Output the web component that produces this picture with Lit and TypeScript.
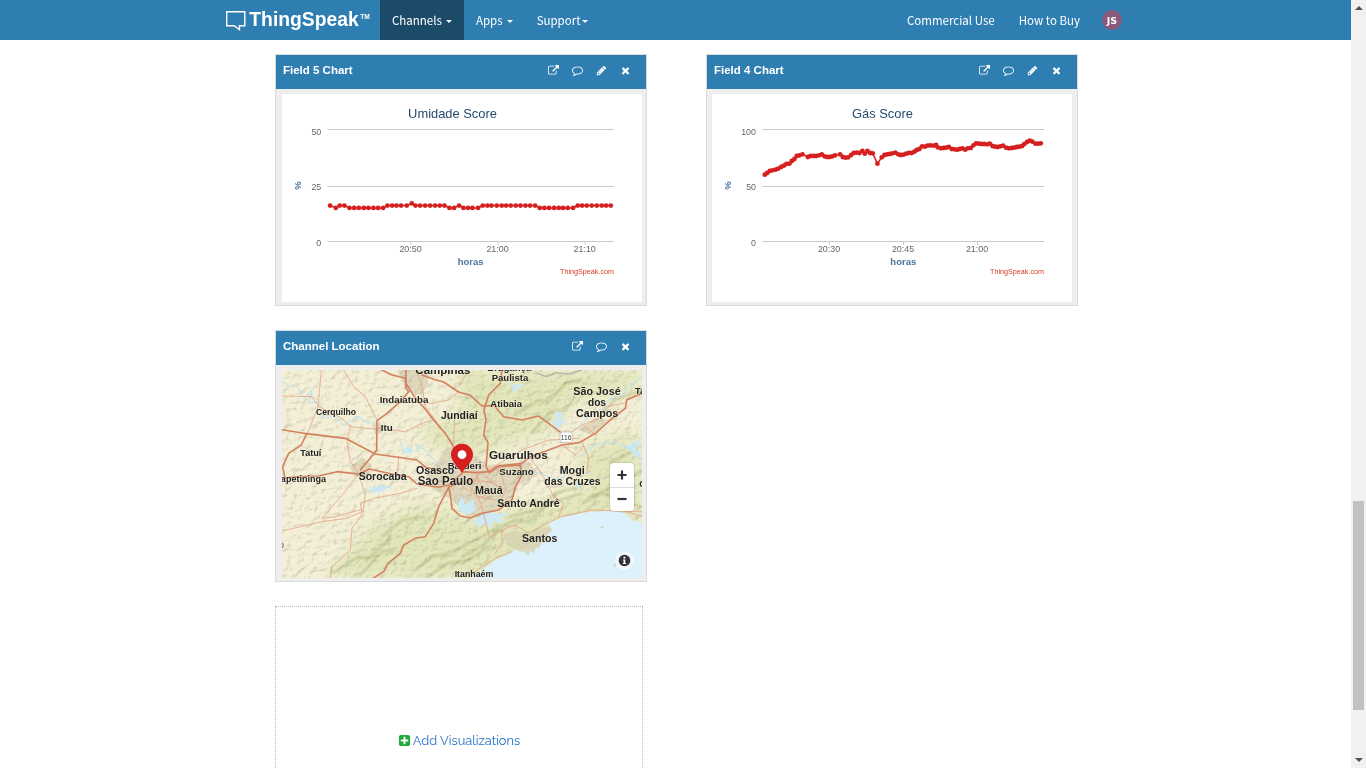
import { LitElement, html, svg, css } from "lit";
import { customElement, property } from "lit/decorators.js";

// 1792-unit glyph outlines for the panel toolbar icons
const ICONS: Record<string, string> = {
  external:
    "M1408 928v320q0 119-84.500 203.500t-203.500 84.500h-832q-119 0-203.500-84.500t-84.500-203.500v-832q0-119 84.500-203.500t203.500-84.500h704q14 0 23 9t9 23v64q0 14-9 23t-23 9h-704q-66 0-113 47t-47 113v832q0 66 47 113t113 47h832q66 0 113-47t47-113v-320q0-14 9-23t23-9h64q14 0 23 9t9 23zm384-864v512q0 26-19 45t-45 19-45-19l-176-176-652 652q-10 10-23 10t-23-10l-114-114q-10-10-10-23t10-23l652-652-176-176q-19-19-19-45t19-45 45-19h512q26 0 45 19t19 45z",
  comment:
    "M896 384q-204 0-381.500 69.500t-282 187.500-104.500 255q0 112 71.500 213.500t201.500 175.500l87 50-27 96q-24 91-70 172 152-63 275-171l43-38 57 6q69 8 130 8 204 0 381.500-69.500t282-187.500 104.500-255-104.500-255-282-187.500-381.500-69.500zm896 512q0 174-120 321.500t-326 233-450 85.500q-70 0-145-8-198 175-460 242-49 14-114 22h-5q-15 0-27-10.500t-16-27.500v-1q-3-4-.5-12t2-10 4.500-9.500l6-9 7-8.500 8-9q7-8 31-34.500t34.500-38 31-39.500 32.500-51 27-59 26-76q-157-89-247.500-220t-90.500-281q0-174 120-321.500t326-233 450-85.500 450 85.500 326 233 120 321.500z",
  pencil:
    "M491 1536l91-91-235-235-91 91v107h128v128h107zm523-928q0-22-22-22-10 0-17 7l-542 542q-7 7-7 17 0 22 22 22 10 0 17-7l542-542q7-7 7-17zm-54-192l416 416-832 832h-416v-416zm683 96q0 53-37 90l-166 166-416-416 166-165q36-38 90-38 53 0 91 38l235 234q37 39 37 91z",
  times:
    "M1490 1322q0 40-28 68l-136 136q-28 28-68 28t-68-28l-294-294-294 294q-28 28-68 28t-68-28l-136-136q-28-28-28-68t28-68l294-294-294-294q-28-28-28-68t28-68l136-136q28-28 68-28t68 28l294 294 294-294q28-28 68-28t68 28l136 136q28 28 28 68t-28 68l-294 294 294 294q28 28 28 68z",
  plus:
    "M1408 960v-128q0-26-19-45t-45-19h-320v-320q0-26-19-45t-45-19h-128q-26 0-45 19t-19 45v320h-320q-26 0-45 19t-19 45v128q0 26 19 45t45 19h320v320q0 26 19 45t45 19h128q26 0 45-19t19-45v-320h320q26 0 45-19t19-45zm256-544v960q0 119-84.500 203.500t-203.500 84.500h-960q-119 0-203.500-84.500t-84.500-203.500v-960q0-119 84.500-203.500t203.500-84.500h960q119 0 203.500 84.500t84.500 203.500z",
};

@customElement("fa-icon")
class FaIcon extends LitElement {
  @property() name = "times";
  static styles = css`
    :host { display: block; width: 11px; height: 11px; }
    svg { display: block; width: 100%; height: 100%; fill: currentColor; }
  `;
  render() {
    return html`<svg viewBox="0 0 1792 1792"><path d=${ICONS[this.name]}></path></svg>`;
  }
}

@customElement("viz-panel")
class VizPanel extends LitElement {
  @property() heading = "";
  @property({ type: Boolean }) editable = false;
  static styles = css`
    :host {
      display: flex; flex-direction: column; box-sizing: border-box;
      width: 372px; height: 252px; border: 1px solid #dadada; background: #eee;
    }
    .head {
      flex: none; height: 34px; box-sizing: border-box; padding: 0 15.300px 4px 7px;
      display: flex; align-items: center; justify-content: space-between;
      background: #2e7eb2; color: #fff; font: bold 11.500px/14px "Liberation Sans", Arial, sans-serif;
    }
    .tools { display: flex; gap: 12.800px; padding-top: 1px; }
    .body { padding: 5px var(--pad-right, 4px) 0 var(--pad-left, 6px); }
  `;
  render() {
    return html`
      <div class="head">
        <span>${this.heading}</span>
        <div class="tools">
          <fa-icon name="external"></fa-icon>
          <fa-icon name="comment"></fa-icon>
          ${this.editable ? html`<fa-icon name="pencil"></fa-icon>` : ""}
          <fa-icon name="times"></fa-icon>
        </div>
      </div>
      <div class="body"><slot></slot></div>
    `;
  }
}

type Pt = [number, number];
interface Tick { x: number; label: string }
interface ChartSpec {
  title: string; titleX: number; left: number; max: number; labelX: number;
  ticks: Tick[]; points: Pt[]; axisX: number;
}

@customElement("line-chart")
class LineChart extends LitElement {
  @property({ attribute: false }) spec!: ChartSpec;
  static styles = css`
    :host { display: block; background: #fff; height: 208px; }
    svg { display: block; font-family: "Liberation Sans", Arial, sans-serif; }
    .title { font-size: 12.900px; fill: #274b6d; }
    .label { font-size: 8.900px; fill: #666; }
    .axis { font-size: 9.500px; font-weight: bold; fill: #4d759e; }
    .credit { font-size: 7.200px; fill: #d63a20; }
    .grid { stroke: #c8c8c8; }
    .base { stroke: #c0d0e0; }
    .line { fill: none; stroke: #d62020; stroke-width: 1.500; }
    .dot { fill: #d62020; }
  `;
  render() {
    const s = this.spec;
    return html`<svg width="360" height="208" viewBox="0 0 360 208">
      <text class="title" x=${s.titleX} y="24" text-anchor="middle">${s.title}</text>
      ${[35.5, 92.5, 147.5].map((y, i) => svg`
        <line class="grid" x1=${s.left} x2="332" y1=${y} y2=${y}></line>
        <text class="label" x=${s.labelX} y=${[41, 96, 152][i]} text-anchor="end">${(s.max * (2 - i)) / 2}</text>`)}
      ${s.ticks.map((t) => svg`
        <line class="base" x1=${t.x + 0.5} x2=${t.x + 0.5} y1="148" y2="151"></line>
        <text class="label" x=${t.x} y="158" text-anchor="middle">${t.label}</text>`)}
      <text class="axis" transform="translate(19 91.500) rotate(-90)" text-anchor="middle">%</text>
      <text class="axis" x=${s.axisX} y="171" text-anchor="middle">horas</text>
      <text class="credit" x="332" y="180" text-anchor="end">ThingSpeak.com</text>
      <polyline class="line" points=${s.points.map((p) => p.join()).join(" ")}></polyline>
      ${s.points.map(([x, y]) => svg`<circle class="dot" cx=${x} cy=${y} r="2.400"></circle>`)}
    </svg>`;
  }
}

// Negative entries are samples one unit lower than the rest
const HUMIDITY: Pt[] = (
  "180 -197 209 223 -238 -252 -266 -281 -295 -310 -324 -339 352 366 379 393 410 425 436 450 465 480 495 509 523 -538 -552 567 -580 -594 -607 -624 638 652 664 680 695 708 722 737 751 766 780 795 -809 -823 -837 -852 -866 -879 -893 -909 923 936 950 965 980 995 1008 1022"
).split(" ").map(Number).map((v): Pt => [Math.abs(v) / 3 - 12 + 0.1, v === 425 ? 109.4 : v < 0 ? 113.9 : 111.6]);

const GAS: Pt[] = (
  "194,374 201,369 209,363 217,361 226,359 234,356 243,351 251,347 259,342 268,341 275,333 283,327 290,318 298,316 307,313 323,321 331,318 340,318 348,318 357,316 365,313 373,319 381,321 389,321 397,319 405,316 420,313 428,321 436,323 444,322 453,315 461,309 470,308 478,309 487,303 494,311 502,303 510,309 518,310 532,341 545,322 553,315 561,313 569,312 577,310 586,308 594,313 602,315 610,314 618,311 626,309 635,309 643,305 650,300 658,297 666,289 674,290 682,287 690,286 699,287 708,285 713,292 722,295 730,294 738,293 746,291 755,297 763,298 771,299 779,297 787,295 795,299 803,295 812,294 820,286 828,280 836,281 844,282 852,282 861,283 869,281 877,288 885,290 893,291 901,289 909,287 918,293 926,295 934,294 942,293 950,291 958,290 966,288 973,282 981,276 989,272 997,275 1006,281 1014,281 1022,280"
).split(" ").map((p): Pt => {
  const [x, y] = p.split(",").map(Number);
  return [x / 3 - 12 + 0.1, y / 3 - 44];
});

const HUMIDITY_CHART: ChartSpec = {
  title: "Umidade Score", titleX: 170.5, left: 45.5, max: 50, labelX: 39.3, axisX: 188.7,
  ticks: [{ x: 128.5, label: "20:50" }, { x: 215.5, label: "21:00" }, { x: 302.7, label: "21:10" }],
  points: HUMIDITY,
};
const GAS_CHART: ChartSpec = {
  title: "Gás Score", titleX: 170.5, left: 50.5, max: 100, labelX: 44, axisX: 191.3,
  ticks: [{ x: 117, label: "20:30" }, { x: 191, label: "20:45" }, { x: 265, label: "21:00" }],
  points: GAS,
};

// Drawn on a 1080x624 canvas, shown at one third size
const HIGHWAYS = [
  "M0 179L74 191L190 205L280 252L405 270L432 292L470 300",
  "M74 191L58 225L20 250L2 290L8 320M0 325L50 320L110 318L165 305L230 312L262 297L330 312L380 320L405 342L470 352L500 345L540 310",
  "M300 0L330 15L370 25L372 55L380 65L355 95L315 130L285 152L284 240L262 268L235 300",
  "M372 0L372 40L400 85L430 118L455 150L492 193L510 222L530 262L540 305",
  "M420 15L455 28L485 36L530 66L565 76L600 108L636 106L665 140L720 150L770 138L800 160L840 190",
  "M660 0L655 40L620 75L606 120L612 150L605 195L618 218L612 290L622 308",
  "M540 305L580 308L622 305L650 288L720 280L745 260L800 240L840 225L892 218L940 190L985 150L1030 115L1034 90L1080 70",
  "M622 308L650 290L715 285L720 315L700 350L690 390L650 420L600 430L565 444L535 438L510 415L505 375L500 352L540 335",
  "M500 352L470 410L455 460L430 500L400 505L365 525L355 550L318 580L305 605L275 624",
];
const ROADS = [
  "M118 0L108 110L75 195M0 78L90 80L110 110L180 145L205 170L290 178",
  "M185 0L215 50L250 80L285 150M205 165L195 215L205 275L230 310",
  "M290 175L370 185L420 160L455 150M405 10L418 40L430 110L500 205",
  "M440 102L500 90L530 66M530 50L560 0M350 260L345 320M518 140L515 225",
  "M0 483L120 455L195 445L240 425L235 400L275 385L355 370L405 355",
  "M230 312L185 370L120 445L160 440L240 418M230 312L250 375L242 430L210 475L205 540L150 590L145 624",
  "M640 290L660 320L672 360L650 400M580 308L612 375L590 385L560 345M590 310L570 350M600 310L650 350M620 300L720 240L800 210L890 205",
  "M585 320L540 350L590 380L640 390M555 330L620 335L672 360M590 385L605 430L622 500",
  "M840 225L880 255L905 230M900 165L950 145L970 110L1034 98M860 190L905 165L935 190L900 215L920 265L915 310",
  "M770 300L790 330L815 380L845 400L830 440M745 265L780 310M660 480L700 465L740 490M640 550L660 520L660 480L620 505",
  "M570 610L640 565L690 545M740 490L785 465L835 440L930 420L1080 425M1035 425L1080 440",
];
const RIVERS = [
  "M0 35L25 50L45 48L65 85L90 60L80 100L110 95L125 120L118 145L160 140L185 165L230 140L260 160L290 150",
  "M352 205L365 250L385 240L410 245L400 220L430 240L455 270L480 290L540 325",
  "M870 185L900 160L935 130L960 115L985 85L1020 75L1045 45L1080 20",
  "M900 255L940 225L1000 215L1040 235L1080 225M1040 235L1080 270L1050 215",
  "M700 310L760 305L830 330L870 300L930 310M250 358L275 365L300 345L328 355",
];
interface Place { t: string; x: number; y: number; w: number; s?: number }
const PLACES: Place[] = [
  { t: "Campinas", x: 400, y: 13, w: 165, s: 34 },
  { t: "Bragança", x: 616, y: 2, w: 132 },
  { t: "Paulista", x: 629, y: 32, w: 110 },
  { t: "Indaiatuba", x: 293, y: 98, w: 146, s: 28 },
  { t: "Cerquilho", x: 102, y: 136, w: 120, s: 26 },
  { t: "Jundiaí", x: 477, y: 146, w: 110, s: 31 },
  { t: "Atibaia", x: 625, y: 111, w: 95 },
  { t: "Itu", x: 296, y: 182, w: 36, s: 28 },
  { t: "Tatuí", x: 55, y: 258, w: 63 },
  { t: "São José", x: 874, y: 74, w: 142, s: 30 },
  { t: "dos", x: 918, y: 107, w: 54, s: 30 },
  { t: "Campos", x: 882, y: 140, w: 127, s: 30 },
  { t: "Ta", x: 1059, y: 72, w: 30, s: 28 },
  { t: "Guarulhos", x: 621, y: 266, w: 176, s: 34 },
  { t: "Barueri", x: 497, y: 297, w: 101 },
  { t: "Osasco", x: 402, y: 313, w: 115, s: 30 },
  { t: "Sao Paulo", x: 407, y: 344, w: 167, s: 36 },
  { t: "Suzano", x: 652, y: 314, w: 103 },
  { t: "Mauá", x: 579, y: 373, w: 83, s: 30 },
  { t: "Mogi", x: 833, y: 311, w: 75, s: 30 },
  { t: "das Cruzes", x: 787, y: 344, w: 169, s: 30 },
  { t: "Santo André", x: 646, y: 410, w: 187, s: 30 },
  { t: "Sorocaba", x: 230, y: 331, w: 144, s: 30 },
  { t: "Itapetininga", x: -20, y: 335, w: 152, s: 27 },
  { t: "Santos", x: 720, y: 515, w: 106, s: 30 },
  { t: "Itanhaém", x: 518, y: 621, w: 116, s: 27 },
  { t: "C", x: 1072, y: 352, w: 20 },
];

@customElement("channel-map")
class ChannelMap extends LitElement {
  static styles = css`
    :host { display: block; position: relative; width: 360px; height: 208px; overflow: hidden; }
    svg { display: block; }
    .line { fill: none; stroke-linejoin: round; stroke-linecap: round; }
    .highway { stroke: #d4805f; stroke-width: 4.800; }
    .road { stroke: #e5a78a; stroke-width: 2.600; }
    .river { stroke: #c0e3ee; stroke-width: 3.200; }
    .lake { fill: #cdeaf4; }
    .urban { fill: #d8cfb2; opacity: .7; }
    .hill { fill: none; stroke: #b3ba80; stroke-width: 6; opacity: .75; stroke-linejoin: round; }
    .relief { mix-blend-mode: multiply; opacity: .17; }
    .place {
      font-family: "Liberation Sans", Arial, sans-serif; font-weight: bold; fill: #222;
      stroke: #fbf8e6; stroke-opacity: .5; stroke-width: 3; paint-order: stroke; stroke-linejoin: round;
    }
    .shield { font: 20px "Liberation Sans", Arial, sans-serif; fill: #444; }
    .zoom {
      position: absolute; right: 8px; top: 93px; width: 24px; height: 48px;
      border-radius: 4px; background: #fff; box-shadow: 0 0 1px 1px rgba(0,0,0,.1);
      display: grid; grid-template-rows: 24px 24px; place-items: center;
    }
    .zoom .minus {
      border-top: 1px solid #ddd; width: 24px; height: 24px; box-sizing: border-box;
      display: grid; place-items: center; padding-bottom: 1px;
    }
    .info { position: absolute; right: 8px; bottom: 8px; }
  `;
  render() {
    return html`
      <svg width="360" height="208" viewBox="0 0 1080 624">
        <defs>
          <filter id="relief" x="0" y="0" width="100%" height="100%" color-interpolation-filters="sRGB">
            <feTurbulence type="fractalNoise" baseFrequency="0.05 0.06" numOctaves="4" seed="8" result="n"></feTurbulence>
            <feDiffuseLighting in="n" surfaceScale="8" diffuseConstant="1.3" lighting-color="#fffef4">
              <feDistantLight azimuth="225" elevation="52"></feDistantLight>
            </feDiffuseLighting>
          </filter>
          <filter id="soft" x="-30%" y="-30%" width="160%" height="160%"><feGaussianBlur stdDeviation="26"></feGaussianBlur></filter>
          <filter id="soften"><feGaussianBlur stdDeviation="3"></feGaussianBlur></filter>
        </defs>
        <rect width="1080" height="624" fill="#f4f0d8"></rect>
        <g filter="url(#soft)" fill="#e2e6ba">
          <path d="M130 624L260 470L420 400L600 440L860 380L1080 340V624Z"></path>
          <path d="M520 0H1080V60L860 100L820 180L640 230L540 180Z"></path>
          <path d="M400 170L620 120L720 190L600 260L470 240Z"></path>
          <path d="M880 240L1080 180V420L930 400Z"></path>
        </g>
        <g filter="url(#soften)">
          <path class="hill" d="M150 610L230 560L260 565L330 500M230 620L300 545L345 535M400 600L450 560L500 550L560 520L600 500L650 470M430 624L500 580L560 570L630 525M540 560L610 520L660 470L700 450L740 455L800 400L900 370M680 440L760 420L830 365L900 350M710 130L770 90L800 95L850 40L900 30M750 190L800 130L850 120L880 80M930 380L990 350L1080 300M980 280L1060 240M300 500L360 450L430 440M960 130L1000 90L1080 60M900 400L960 370L1040 400L1080 410"></path>
        </g>
        <g class="urban">
          <path d="M345 0H435L440 45L415 75L375 65Z"></path>
          <path d="M205 290L240 260L270 285L260 315L215 318Z"></path>
          <path d="M430 320L500 230L560 245L620 285L740 275L770 315L710 345L690 390L640 425L560 440L510 390L440 350Z"></path>
          <path d="M890 180L940 145L980 150L930 195Z"></path>
          <path d="M270 160L295 155L300 190L280 195Z"></path>
        </g>
        <rect class="relief" width="1080" height="624" filter="url(#relief)"></rect>
        <path fill="#dcf1fb" d="M566 624L600 600L650 565L690 546L700 535L715 545L735 535L760 540L775 520L800 510L790 490L810 480L800 460L845 440L920 426L985 422L1030 430L1050 450L1080 458V624Z"></path>
        <path class="urban" d="M665 490L700 482L740 490L800 470L812 480L790 500L800 515L780 518L770 535L760 530L756 550L745 542L740 558L725 545L700 540L675 525Z"></path>
        <circle cx="960" cy="472" r="4" fill="#d3d5ad"></circle>
        <path d="M992 588l8-8 4 3-6 8z" fill="#d3d5ad"></path>
        <g class="lake">
          <path d="M530 395L540 380L548 392L545 405L575 388L580 420L565 432L545 430L530 420Z"></path>
          <path d="M570 455L600 435L625 425L645 432L680 428L655 445L665 462L632 452L625 480L612 455L590 475L587 460Z"></path>
          <path d="M805 150L825 155L818 122L842 130L838 152L862 145L832 168L815 190L818 165Z"></path>
          <path d="M675 35L700 45L730 40L712 55L690 72L695 52Z"></path>
          <path d="M365 235L385 228L392 255L375 250ZM255 350L280 355L290 342L300 352L325 345L308 362L280 368Z"></path>
          <path d="M1030 230L1080 205L1060 235L1080 250L1062 260ZM880 345L895 335L890 360Z"></path>
        </g>
        ${RIVERS.map((d) => svg`<path class="line river" d=${d}></path>`)}
        <path class="line" stroke="#b5b3a8" stroke-width="4" d="M765 10L795 20L820 8L860 12L900 0"></path>
        ${ROADS.map((d) => svg`<path class="line road" d=${d}></path>`)}
        ${HIGHWAYS.map((d) => svg`<path class="line highway" d=${d}></path>`)}
        ${PLACES.map((p) => svg`<text class="place" x=${p.x} y=${p.y} font-size=${p.s ?? 27}
          textLength=${p.w} lengthAdjust="spacingAndGlyphs">${p.t}</text>`)}
        <text x="-8" y="534" font-size="25" font-family="Liberation Sans, sans-serif" fill="#333">o</text>
        <rect x="834" y="186" width="37" height="31" rx="7" fill="#fff" stroke="#aaa" stroke-width="2"></rect>
        <text class="shield" x="852.500" y="209" text-anchor="middle">116</text>
        <path d="M540 309C532 292 507 276 507 254A33 33 0 0 1 573 254C573 276 548 292 540 309Z" fill="#d62020"></path>
        <circle cx="540" cy="254" r="13" fill="#fff"></circle>
      </svg>
      <div class="zoom">
        <svg width="10" height="10"><path d="M5 .5v9M.5 5h9" stroke="#333" stroke-width="2.200"></path></svg>
        <div class="minus"><svg width="10" height="10"><path d="M.5 5h9" stroke="#333" stroke-width="2.200"></path></svg></div>
      </div>
      <svg class="info" width="19" height="19" viewBox="0 0 19 19">
        <circle cx="9.500" cy="9.500" r="9.500" fill="#fff" opacity=".55"></circle>
        <circle cx="9.500" cy="9.500" r="5.800" fill="#333"></circle>
        <path d="M8 8.500h2.300v3.500h.8v1H7.900v-1h.7V9.500H8zM8.500 5.700h1.900v1.800H8.500z" fill="#fff"></path>
      </svg>
    `;
  }
}

@customElement("app-root")
class AppRoot extends LitElement {
  static styles = css`
    :host {
      display: flex; width: 1366px; height: 768px; overflow: hidden; background: #fff;
      font-family: "Liberation Sans", Arial, sans-serif;
    }
    .page { flex: 1; min-width: 0; display: flex; flex-direction: column; }
    .nav {
      flex: none; height: 40px; box-sizing: border-box; padding: 0 229px 0 225px;
      display: flex; background: #2e7eb2; color: #fff;
      font: 11.500px/40px "Noto Sans CJK SC", "Noto Sans", sans-serif;
    }
    .logo { display: block; width: 155px; height: 40px; }
    .logo-word { font: bold 20px "Liberation Sans", Arial, sans-serif; }
    .logo-tm { font: bold 7px "Liberation Sans", Arial, sans-serif; }
    .item { display: flex; align-items: center; gap: 4px; padding: 0 12px; white-space: nowrap; }
    .item.active { background: #1b4b69; box-sizing: border-box; width: 84px; }
    .item.tight { gap: 1px; }
    .caret { border: 3.500px solid transparent; border-top-color: #fff; border-bottom: 0; margin-top: 2px; }
    .spacer { flex: 1; }
    .avatar {
      align-self: center; width: 20px; height: 20px; border-radius: 50%; margin-left: 10px;
      background: #8a587c; font: bold 9.500px/21px "DejaVu Sans", sans-serif; text-align: center;
    }
    .main { flex: 1; min-height: 0; overflow: hidden; padding: 14px 0 0 275px; }
    .grid { display: grid; grid-template-columns: 372px 372px; column-gap: 59px; row-gap: 24px; }
    .even { --pad-left: 5px; --pad-right: 5px; }
    .add {
      box-sizing: border-box; width: 368px; height: 252px; border: 1px dotted #bbb;
      display: flex; justify-content: center; align-items: flex-start; padding-top: 125px;
      font: 12.800px/18px Raleway, Lato, sans-serif; color: #1f6fc8;
    }
    .add-link { display: flex; align-items: center; gap: 2px; }
    .plus { width: 13px; height: 13px; color: #25ab3a; margin-bottom: 1px; }
    .scroll {
      flex: none; width: 15px; background: #f1f1f1; display: flex; flex-direction: column;
      align-items: center; box-sizing: border-box; padding: 6px 0 6px;
    }
    .up, .down { border: 4px solid transparent; }
    .up { border-top: 0; border-bottom-color: #505050; }
    .down { border-bottom: 0; border-top-color: #505050; }
    .track { flex: 1; display: flex; flex-direction: column; justify-content: flex-end; padding-bottom: 48px; }
    .thumb { width: 11px; height: 209px; background: #c1c1c1; }
  `;
  render() {
    return html`
      <div class="page">
        <div class="nav">
          <svg class="logo" viewBox="0 0 155 40">
            <path d="M1.700 11.700h18.100v14H14.500v4l-5.300-4H1.700z" fill="none" stroke="#fff" stroke-width="1.400"></path>
            <text class="logo-word" x="24.300" y="26.200" textLength="109.500" lengthAdjust="spacingAndGlyphs" fill="#fff">ThingSpeak</text>
            <text class="logo-tm" x="135.300" y="18.500" textLength="9.500" lengthAdjust="spacingAndGlyphs" fill="#fff">TM</text>
          </svg>
          <div class="item active">Channels <span class="caret"></span></div>
          <div class="item">Apps <span class="caret"></span></div>
          <div class="item tight">Support<span class="caret"></span></div>
          <div class="spacer"></div>
          <div class="item">Commercial Use</div>
          <div class="item">How to Buy</div>
          <div class="avatar">JS</div>
        </div>
        <div class="main">
          <div class="grid">
            <viz-panel heading="Field 5 Chart" editable><line-chart .spec=${HUMIDITY_CHART}></line-chart></viz-panel>
            <viz-panel class="even" heading="Field 4 Chart" editable><line-chart .spec=${GAS_CHART}></line-chart></viz-panel>
            <viz-panel heading="Channel Location"><channel-map></channel-map></viz-panel>
            <div></div>
            <div class="add">
              <div class="add-link"><fa-icon class="plus" name="plus"></fa-icon><span>Add Visualizations</span></div>
            </div>
          </div>
        </div>
      </div>
      <div class="scroll">
        <div class="up"></div>
        <div class="track"><div class="thumb"></div></div>
        <div class="down"></div>
      </div>
    `;
  }
}
